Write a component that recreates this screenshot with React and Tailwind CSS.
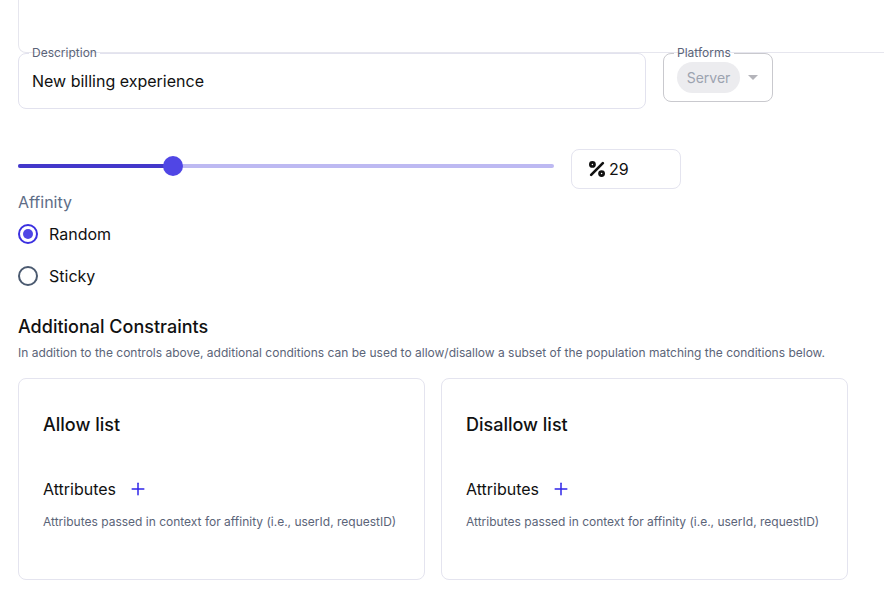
import React, { useState } from 'react';
import { Percent, Plus } from 'lucide-react';

const ListCard = ({ title }) => (
  <div className="w-[407px] h-[202px] border border-[#e4e4ef] rounded-lg px-6 pt-[32px]">
    <h3 className="text-[18px] leading-[28px] font-medium text-[#111111]">{title}</h3>
    <div className="mt-[38px] flex items-center gap-3 h-6">
      <span className="text-[16px] leading-6 text-[#111111]">Attributes</span>
      <Plus className="w-[20px] h-[20px] text-[#2f25e8]" strokeWidth={1.8} />
    </div>
    <p className="mt-[13px] text-[12px] leading-4 text-[#5b6478]">
      Attributes passed in context for affinity (i.e., userId, requestID)
    </p>
  </div>
);

const Radio = ({ checked, label, onClick }) => (
  <button type="button" onClick={onClick} className="flex items-center gap-[11px] h-6">
    <span
      className={
        checked
          ? 'w-[20px] h-[20px] rounded-full border-2 border-[#3b30e0] flex items-center justify-center'
          : 'w-[20px] h-[20px] rounded-full border-2 border-[#4b5a70] flex items-center justify-center'
      }
    >
      {checked && <span className="w-[10px] h-[10px] rounded-full bg-[#4f46e5]" />}
    </span>
    <span className="text-[16px] leading-6 text-[#111111]">{label}</span>
  </button>
);

const App = () => {
  const [affinity, setAffinity] = useState('random');
  const value = 29;

  return (
    <div className="w-[884px] h-[600px] overflow-hidden bg-white font-['Inter',sans-serif]">
      <div className="ml-[18px] w-[900px] h-[53px] border border-t-0 border-[#e6e6ee] rounded-bl-lg" />

      <div className="-mt-[8px] flex items-start gap-[17px] pl-[18px]">
        <fieldset className="w-[628px] h-[64px] border border-[#e2e2ee] rounded-lg px-[10px]">
          <legend className="px-[3px] text-[12px] leading-4 text-[#5b6478]">Description</legend>
          <div className="pl-[3px] pt-[8px] text-[16px] leading-6 text-[#111111]">New billing experience</div>
        </fieldset>
        <fieldset className="w-[110px] h-[57px] border border-[#c9c9ce] rounded-lg px-[10px]">
          <legend className="px-[3px] text-[12px] leading-4 text-[#5b6478]">Platforms</legend>
          <div className="pl-[3px] mt-[1px] flex items-center gap-[8px]">
            <span className="w-[63px] h-[31px] rounded-full bg-[#ececef] flex items-center justify-center text-[14px] text-[#9ca3af]">
              Server
            </span>
            <span className="w-0 h-0 border-l-[5px] border-r-[5px] border-t-[5px] border-l-transparent border-r-transparent border-t-[#b4b4ba]" />
          </div>
        </fieldset>
      </div>

      <div className="mt-[40px] pl-[18px] flex items-center gap-[17px]">
        <div className="relative w-[536px] h-[20px] flex items-center -mt-[6px]">
          <div className="w-full h-[4px] rounded-full bg-[#bdb9f2] flex">
            <div className="h-[4px] rounded-full bg-[#4338ca]" style={{ width: `${value}%` }} />
          </div>
          <div
            className="absolute top-0 w-[20px] h-[20px] -ml-[10px] rounded-full bg-[#5046e5]"
            style={{ left: `${value}%` }}
          />
        </div>
        <div className="w-[110px] h-[40px] border border-[#e4e4ef] rounded-lg flex items-center pl-[15px] gap-[2px]">
          <Percent className="w-[20px] h-[20px] text-[#111111]" strokeWidth={3.2} />
          <span className="text-[16px] leading-6 text-[#111111]">{value}</span>
        </div>
      </div>

      <div className="pl-[18px] mt-[1px]">
        <div className="text-[16px] leading-6 text-[#5e6d87]">Affinity</div>
        <div className="mt-[8px] flex flex-col gap-[18px]">
          <Radio checked={affinity === 'random'} label="Random" onClick={() => setAffinity('random')} />
          <Radio checked={affinity === 'sticky'} label="Sticky" onClick={() => setAffinity('sticky')} />
        </div>

        <h2 className="mt-[25px] text-[18px] leading-[28px] font-medium text-[#111111]">Additional Constraints</h2>
        <p className="mt-[4px] text-[12px] leading-4 text-[#5b6478]">
          In addition to the controls above, additional conditions can be used to allow/disallow a subset of the
          population matching the conditions below.
        </p>

        <div className="mt-[17px] flex gap-[16px]">
          <ListCard title="Allow list" />
          <ListCard title="Disallow list" />
        </div>
      </div>
    </div>
  );
};

export default App;
